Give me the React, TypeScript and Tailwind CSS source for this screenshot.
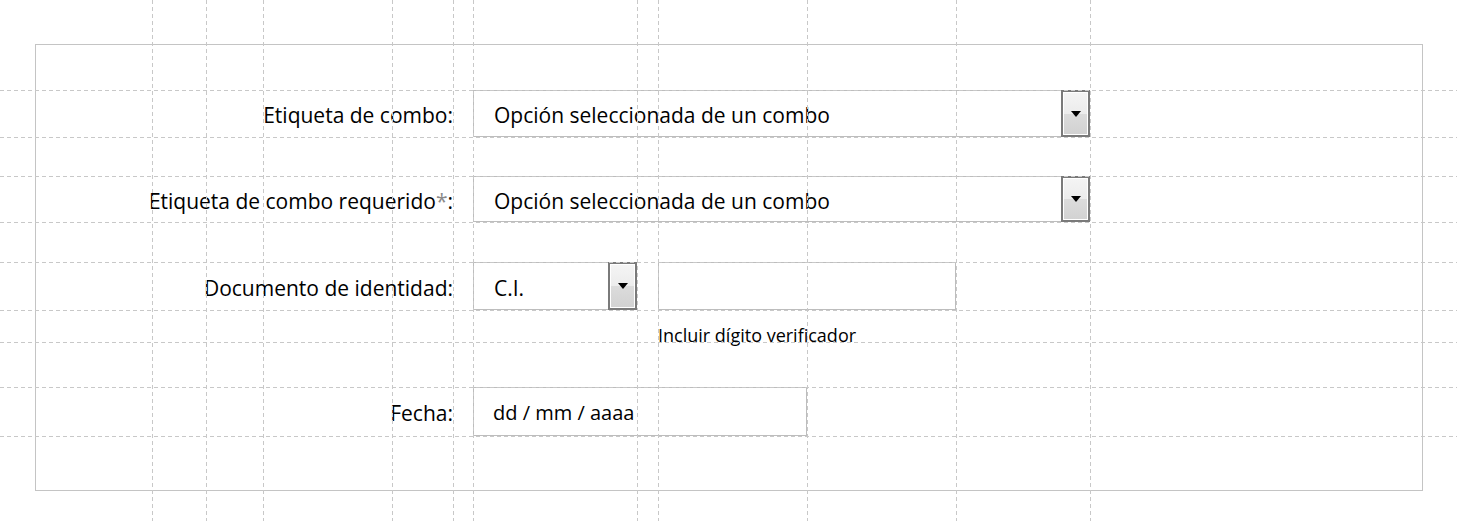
import React from 'react'

// guide lines drawn over the form (as in the reference mockup)
const vGuides = [152, 206, 263, 392, 453, 473, 637, 658, 807, 956, 1090]
const hGuides = [90, 137, 176, 222, 262, 310, 342, 387, 436]

const Guides: React.FC = () => (
  <svg
    className="absolute inset-0 pointer-events-none"
    width={1457}
    height={521}
    viewBox="0 0 1457 521"
  >
    {vGuides.map((x) => (
      <line key={`v${x}`} x1={x + 0.5} y1={0} x2={x + 0.5} y2={521} stroke="#c8c8c8" strokeWidth={1} strokeDasharray="4 3" />
    ))}
    {hGuides.map((y) => (
      <line key={`h${y}`} x1={0} y1={y + 0.5} x2={1457} y2={y + 0.5} stroke="#c8c8c8" strokeWidth={1} strokeDasharray="4 3" />
    ))}
  </svg>
)

const DropButton: React.FC = () => (
  <div className="w-[29px] h-full border-2 border-[#7a7a7a] shrink-0">
    <div className="w-full h-full border border-white bg-[linear-gradient(#f4f4f4_0%,#ececec_50%,#dcdcdc_50%,#d2d2d2_100%)] flex items-center justify-center">
      <svg width="10" height="6" viewBox="0 0 10 6">
        <polygon points="0,0 10,0 5,6" fill="#000" />
      </svg>
    </div>
  </div>
)

const Combo: React.FC<{ value: string; className?: string }> = ({ value, className }) => (
  <div className={`flex h-full ${className ?? ''}`}>
    <div className="flex-1 flex items-center pl-5 pt-[5px] border border-r-0 border-[#bdbdbd] text-[21px] text-black">
      {value}
    </div>
    <DropButton />
  </div>
)

const Row: React.FC<{ label: React.ReactNode; className?: string; children: React.ReactNode }> = ({ label, className, children }) => (
  <div className={`flex items-center gap-5 ${className ?? ''}`}>
    <label className="w-[417px] shrink-0 pt-[5px] text-right text-[21px] text-black whitespace-nowrap">{label}</label>
    {children}
  </div>
)

export default function App() {
  return (
    <div className="relative w-[1457px] h-[521px] bg-white overflow-hidden pt-[44px] pl-[35px] font-['Open_Sans','Noto_Sans',sans-serif]">
      <div className="w-[1388px] h-[447px] border border-[#c4c4c4] pt-[45px]">
        <Row label="Etiqueta de combo:" className="h-[47px]">
          <Combo value="Opción seleccionada de un combo" className="w-[617px]" />
        </Row>

        <Row
          label={
            <>
              Etiqueta de combo requerido<span className="text-[#8a8a8a]">*</span>:
            </>
          }
          className="h-[46px] mt-[39px]"
        >
          <Combo value="Opción seleccionada de un combo" className="w-[617px]" />
        </Row>

        <Row label="Documento de identidad:" className="h-[48px] mt-[40px]">
          <Combo value="C.I." className="w-[164px]" />
          <input
            type="text"
            className="w-[298px] h-full ml-px border border-[#bdbdbd] outline-none"
          />
        </Row>
        <p className="ml-[622px] mt-[14px] text-[18px] leading-[22px] text-black">Incluir dígito verificador</p>

        <Row label="Fecha:" className="h-[49px] mt-[41px]">
          <div className="w-[334px] h-full flex items-center pl-[19px] pt-[2px] border border-[#bdbdbd] text-[20px] text-black">
            dd / mm / aaaa
          </div>
        </Row>
      </div>
      <Guides />
    </div>
  )
}
